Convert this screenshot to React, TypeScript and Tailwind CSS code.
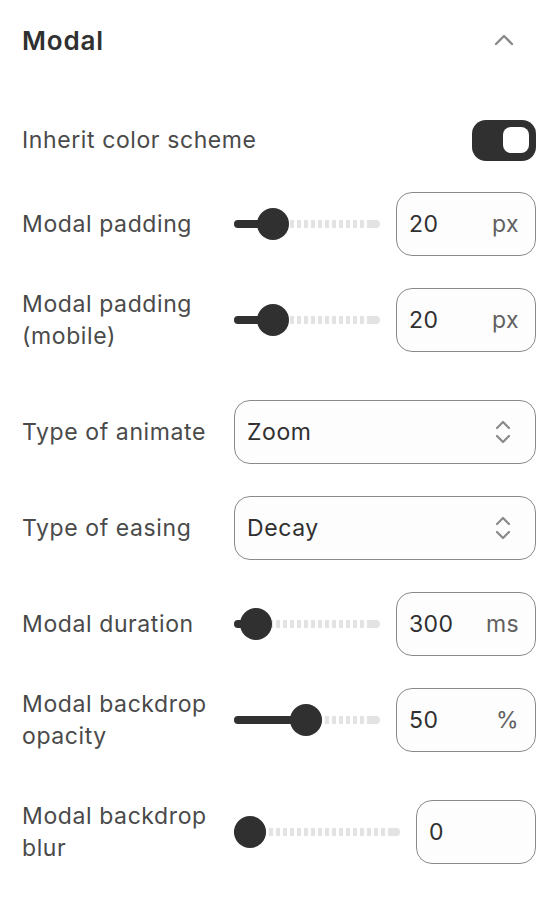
import React from "react";

const font = { fontFamily: "Inter, 'Noto Sans', sans-serif" };

function Slider({ width, knob }: { width: number; knob: number }) {
  // knob = centre offset from left edge of the track, in px
  return (
    <div className="relative h-[32px] shrink-0" style={{ width }}>
      <div className="absolute left-0 right-0 top-[12px] h-[8px] rounded-full bg-[repeating-linear-gradient(90deg,#e3e3e3_0_4px,transparent_4px_7px)]" />
      <div className="absolute right-0 top-[12px] h-[8px] w-[12px] rounded-r-full bg-[#e3e3e3]" />
      <div
        className="absolute left-0 top-[12px] h-[8px] rounded-full bg-[#303030]"
        style={{ width: knob }}
      />
      <div
        className="absolute top-0 h-[32px] w-[32px] rounded-full bg-[#303030]"
        style={{ left: knob - 16 }}
      />
    </div>
  );
}

function NumberBox({ value, unit, width = 140 }: { value: string; unit?: string; width?: number }) {
  return (
    <div
      className="flex h-[64px] shrink-0 items-center justify-between rounded-[16px] border border-[#8a8a8a] bg-[#fdfdfd] pl-[12px] pr-[16px]"
      style={{ width }}
    >
      <span className="text-[23px] tracking-[0.4px] text-[#303030]">{value}</span>
      {unit && <span className="text-[23px] tracking-[0.4px] text-[#616161]">{unit}</span>}
    </div>
  );
}

function SelectBox({ value }: { value: string }) {
  return (
    <div className="flex h-[64px] w-[302px] items-center justify-between rounded-[16px] border border-[#8a8a8a] bg-[#fdfdfd] pl-[12px] pr-[22px]">
      <span className="text-[23px] tracking-[0.6px] text-[#303030]">{value}</span>
      <svg width="20" height="28" viewBox="0 0 20 28" fill="none" stroke="#8a8a8a" strokeWidth="2.2" strokeLinecap="round" strokeLinejoin="round">
        <path d="M4 10 L10 4 L16 10" />
        <path d="M4 18 L10 24 L16 18" />
      </svg>
    </div>
  );
}

function Row({ label, children, className = "" }: { label: React.ReactNode; children: React.ReactNode; className?: string }) {
  return (
    <div className={`flex h-[64px] items-center ${className}`}>
      <div className="w-[212px] whitespace-nowrap text-[23px] leading-[32px] tracking-[0.6px] text-[#4a4a4a]">{label}</div>
      <div className="flex flex-1 items-center justify-end gap-[16px]">{children}</div>
    </div>
  );
}

export default function App() {
  return (
    <div className="min-h-[902px] w-[554px] bg-white pl-[22px] pr-[18px]" style={font}>
      <div className="flex h-[80px] items-center justify-between">
        <h2 className="text-[26px] font-semibold tracking-[0.8px] text-[#303030]">Modal</h2>
        <svg className="mr-[20px]" width="24" height="16" viewBox="0 0 24 16" fill="none" stroke="#8a8a8a" strokeWidth="2.4" strokeLinecap="round" strokeLinejoin="round">
          <path d="M4 12 L12 4 L20 12" />
        </svg>
      </div>

      <div className="mt-[40px] flex h-[40px] items-center justify-between">
        <span className="text-[23px] tracking-[0.6px] text-[#4a4a4a]">Inherit color scheme</span>
        <div className="flex h-[41px] w-[64px] items-center justify-end rounded-[14px] bg-[#303030] pr-[7px]">
          <div className="h-[26px] w-[26px] rounded-[8px] bg-white" />
        </div>
      </div>

      <Row label="Modal padding" className="mt-[32px]">
        <Slider width={146} knob={39} />
        <NumberBox value="20" unit="px" />
      </Row>

      <Row label={<>Modal padding<br />(mobile)</>} className="mt-[32px]">
        <Slider width={146} knob={39} />
        <NumberBox value="20" unit="px" />
      </Row>

      <Row label="Type of animate" className="mt-[48px]">
        <SelectBox value="Zoom" />
      </Row>

      <Row label="Type of easing" className="mt-[32px]">
        <SelectBox value="Decay" />
      </Row>

      <Row label="Modal duration" className="mt-[32px]">
        <Slider width={146} knob={22} />
        <NumberBox value="300" unit="ms" />
      </Row>

      <Row label={<>Modal backdrop<br />opacity</>} className="mt-[32px]">
        <Slider width={146} knob={72} />
        <NumberBox value="50" unit="%" />
      </Row>

      <Row label={<>Modal backdrop<br />blur</>} className="mt-[48px]">
        <Slider width={166} knob={16} />
        <NumberBox value="0" width={120} />
      </Row>
    </div>
  );
}
